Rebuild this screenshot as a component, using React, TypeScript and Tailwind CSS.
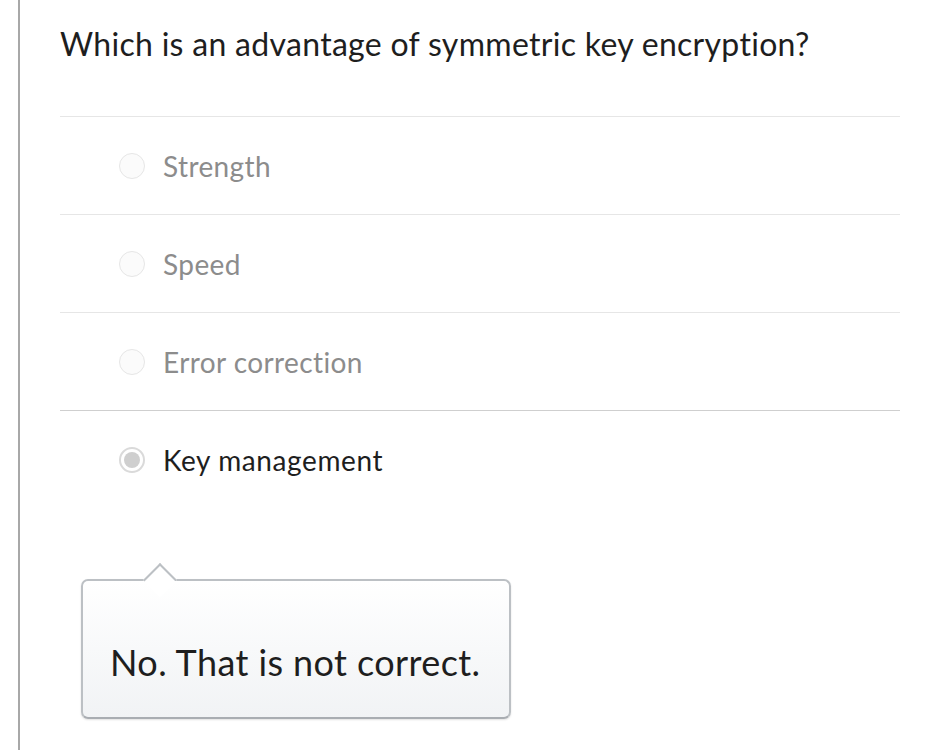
const options = [
  { label: "Strength", selected: false },
  { label: "Speed", selected: false },
  { label: "Error correction", selected: false },
  { label: "Key management", selected: true },
];

function Radio({ selected }: { selected: boolean }) {
  if (selected) {
    return (
      <span className="flex h-[26px] w-[26px] shrink-0 items-center justify-center rounded-full border-2 border-[#dadada] bg-white">
        <span className="h-[16px] w-[16px] rounded-full bg-[#cfcfcf]" />
      </span>
    );
  }
  return <span className="h-[26px] w-[26px] shrink-0 rounded-full border border-[#e6e6e6] bg-[#fbfbfb]" />;
}

export default function App() {
  return (
    <div className="flex min-h-[750px] bg-white font-['Lato','Noto_Sans',sans-serif]">
      <div className="ml-[18px] w-[2px] shrink-0 bg-[#a8a8a8]" />
      <div className="flex-1 pl-[40px] pr-[38px]">
        <h1 className="pt-[22px] pb-[50px] text-[32px] leading-[44px] tracking-[0.3px] text-[#1e1e1e]">
          Which is an advantage of symmetric key encryption?
        </h1>
        <ul>
          {options.map((option, index) => (
            <li
              key={option.label}
              className={
                index === 3
                  ? "flex h-[98px] items-center gap-[18px] border-t border-[#cfcfcf] pl-[59px]"
                  : "flex h-[98px] items-center gap-[18px] border-t border-[#e6e6e6] pl-[59px]"
              }
            >
              <Radio selected={option.selected} />
              <span
                className={
                  option.selected
                    ? "text-[28px] tracking-[0.6px] text-[#1e1e1e]"
                    : "text-[28px] tracking-[0.4px] text-[#8c8c8c]"
                }
              >
                {option.label}
              </span>
            </li>
          ))}
        </ul>
        <div className="relative mt-[71px] ml-[21px] w-[430px]">
          <div className="absolute left-[67px] top-[-11px] h-[24px] w-[24px] rotate-45 border-l-2 border-t-2 border-[#bcc0c4] bg-white" />
          <div className="flex h-[140px] items-center rounded-[7px] border-2 border-[#bcc0c4] border-b-[#a9adb2] bg-gradient-to-b from-white to-[#f1f3f5] pl-[27px] pt-[26px] shadow-[0_1px_2px_rgba(0,0,0,0.12)]">
            <p className="text-[36px] tracking-[0.4px] text-[#1e1e1e]">No. That is not correct.</p>
          </div>
          <div className="absolute left-[69px] top-[2px] h-[3px] w-[30px] bg-white" />
        </div>
      </div>
    </div>
  );
}
